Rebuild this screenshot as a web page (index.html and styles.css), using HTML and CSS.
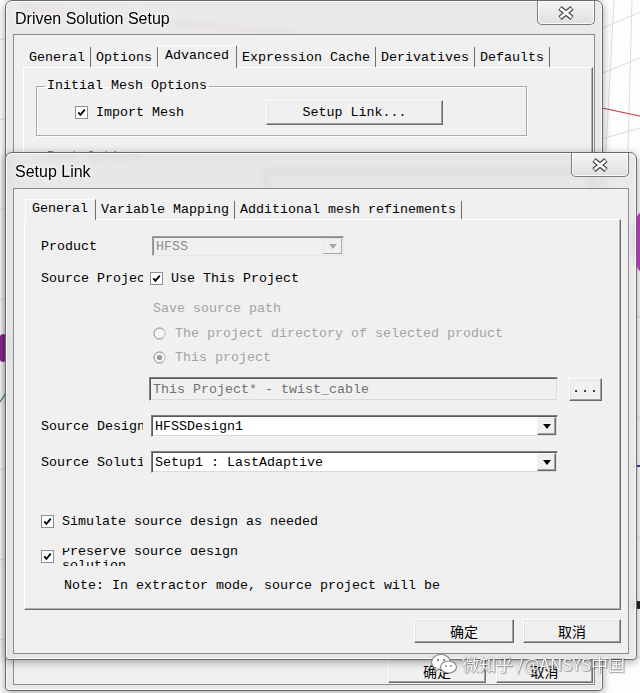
FILE: index.html
```html
<!DOCTYPE html>
<html lang="en">
<head>
  <meta charset="UTF-8" />
  <title>Setup Link</title>
  <link rel="stylesheet" href="styles.css">
</head>
<body>
  <div class="desk">
    <!-- modeler viewport behind the dialogs -->
    <svg class="viewport" width="640" height="693" viewBox="0 0 640 693">
      <g stroke="#dcdcdc" stroke-width="1" fill="none">
        <path d="M0 40 L8 38 M0 120 L8 118 M0 210 L8 208 M0 300 L8 298 M0 470 L8 468 M0 560 L8 558 M0 640 L8 638"/>
        <path d="M598 30 L640 12 M598 75 L640 58 M598 140 L640 128 M614 0 L606 150 M632 0 L628 150"/>
        <path d="M632 320 L640 316 M632 420 L640 417 M632 540 L640 537 M632 660 L640 657"/>
      </g>
      <path d="M18 0 Q26 9 60 14 L300 34" stroke="#d42a2a" stroke-width="2" fill="none" opacity=".6"/>
      <path d="M597 107 L640 116" stroke="#c43a3a" stroke-width="1.2"/>
      <ellipse cx="3" cy="348" rx="6" ry="14" fill="#8c2a96"/>
      <path d="M0 402 L6 393" stroke="#3a7d3a" stroke-width="1.2"/>
      <ellipse cx="642" cy="242" rx="9" ry="30" fill="#c83bd2"/>
      <path d="M632 466 L640 466" stroke="#3348b0" stroke-width="2"/>
      <ellipse cx="638" cy="605" rx="5" ry="4" fill="#222"/>
    </svg>

    <!-- parent dialog -->
    <div class="win win-driven">
      <div class="titlebar">
        <span class="title">Driven Solution Setup</span>
        <span class="close">
          <svg width="18" height="14" viewBox="0 0 18 14">
            <path d="M3 2 L15 12 M15 2 L3 12" stroke="#4a4a4a" stroke-width="5"/>
            <path d="M3.5 2.5 L14.5 11.5 M14.5 2.5 L3.5 11.5" stroke="#fff" stroke-width="2.6"/>
          </svg>
        </span>
      </div>
      <div class="client">
        <div class="tabs">
          <span class="tab">General</span>
          <span class="tab">Options</span>
          <span class="tab active">Advanced</span>
          <span class="tab">Expression Cache</span>
          <span class="tab">Derivatives</span>
          <span class="tab">Defaults</span>
        </div>
        <div class="panel driven-panel">
          <fieldset class="group">
            <legend>Initial Mesh Options</legend>
            <div class="group-row">
              <label class="check import">
                <svg class="box" width="13" height="13" viewBox="0 0 13 13"><rect x=".5" y=".5" width="12" height="12" fill="#fff" stroke="#8e8f8f"/><path d="M3.3 6.4 L5.4 8.8 L9.8 3.6" fill="none" stroke="#000" stroke-width="1.8"/></svg>
                Import Mesh
              </label>
              <span class="btn setup-btn">Setup Link...</span>
            </div>
          </fieldset>
          <fieldset class="group post">
            <legend>Post Options</legend>
            <div class="group-row post-row">
              <span class="field post-field"></span>
            </div>
          </fieldset>
        </div>
        <div class="footer">
          <span class="btn cjk ok-outer">确定</span>
          <span class="btn cjk cancel-outer">取消</span>
        </div>
      </div>
    </div>

    <!-- child dialog -->
    <div class="win win-link">
      <div class="titlebar link-bar">
        <span class="title">Setup Link</span>
        <span class="close">
          <svg width="18" height="14" viewBox="0 0 18 14">
            <path d="M3 2 L15 12 M15 2 L3 12" stroke="#4a4a4a" stroke-width="5"/>
            <path d="M3.5 2.5 L14.5 11.5 M14.5 2.5 L3.5 11.5" stroke="#fff" stroke-width="2.6"/>
          </svg>
        </span>
      </div>
      <div class="client link-client">
        <div class="tabs link-tabs">
          <span class="tab active">General</span>
          <span class="tab">Variable Mapping</span>
          <span class="tab">Additional mesh refinements</span>
        </div>
        <div class="panel link-panel">
          <div class="row r-product">
            <span class="lbl">Product</span>
            <span class="combo disabled product-combo">
              <span class="combo-text">HFSS</span>
              <span class="arrow"></span>
            </span>
          </div>
          <div class="row r-project">
            <span class="lbl">Source Project</span>
            <label class="check use-project">
              <svg class="box" width="13" height="13" viewBox="0 0 13 13"><rect x=".5" y=".5" width="12" height="12" fill="#fff" stroke="#8e8f8f"/><path d="M3.3 6.4 L5.4 8.8 L9.8 3.6" fill="none" stroke="#000" stroke-width="1.8"/></svg>
              Use This Project
            </label>
          </div>
          <div class="row r-save indent dim">Save source path</div>
          <div class="row r-radio1 indent dim">
            <svg class="radio" width="13" height="13" viewBox="0 0 13 13"><circle cx="6.5" cy="6.5" r="5.5" fill="#f6f6f6" stroke="#b9b9b9"/><path d="M10.4 2.6 A5.5 5.5 0 1 0 10.4 10.4" fill="none" stroke="#9d9d9d"/></svg>
            The project directory of selected product
          </div>
          <div class="row r-radio2 indent dim">
            <svg class="radio" width="13" height="13" viewBox="0 0 13 13"><circle cx="6.5" cy="6.5" r="5.5" fill="#f6f6f6" stroke="#b9b9b9"/><path d="M10.4 2.6 A5.5 5.5 0 1 0 10.4 10.4" fill="none" stroke="#9d9d9d"/><circle cx="6.5" cy="6.5" r="2.6" fill="#9a9a9a"/></svg>
            This project
          </div>
          <div class="row r-path">
            <span class="field path-field">This Project* - twist_cable</span>
            <span class="btn dots">...</span>
          </div>
          <div class="row r-design">
            <span class="lbl">Source Design</span>
            <span class="combo wide">
              <span class="combo-text">HFSSDesign1</span>
              <span class="arrow"></span>
            </span>
          </div>
          <div class="row r-solution">
            <span class="lbl">Source Solution</span>
            <span class="combo wide">
              <span class="combo-text">Setup1 : LastAdaptive</span>
              <span class="arrow"></span>
            </span>
          </div>
          <div class="row r-simulate">
            <label class="check">
              <svg class="box" width="13" height="13" viewBox="0 0 13 13"><rect x=".5" y=".5" width="12" height="12" fill="#fff" stroke="#8e8f8f"/><path d="M3.3 6.4 L5.4 8.8 L9.8 3.6" fill="none" stroke="#000" stroke-width="1.8"/></svg>
              Simulate source design as needed
            </label>
          </div>
          <div class="row r-preserve">
            <svg class="box" width="13" height="13" viewBox="0 0 13 13"><rect x=".5" y=".5" width="12" height="12" fill="#fff" stroke="#8e8f8f"/><path d="M3.3 6.4 L5.4 8.8 L9.8 3.6" fill="none" stroke="#000" stroke-width="1.8"/></svg>
            <span class="clip"><span>Preserve source design solution</span></span>
          </div>
          <div class="row r-note">Note: In extractor mode, source project will be</div>
        </div>
        <div class="footer link-footer">
          <span class="btn cjk ok">确定</span>
          <span class="btn cjk cancel">取消</span>
        </div>
      </div>
    </div>

    <div class="watermark">
      <svg width="28" height="22" viewBox="0 0 28 22">
        <ellipse cx="11" cy="9" rx="9.5" ry="7.5" fill="#fff" stroke="#8a8a8a" stroke-width="1.2"/>
        <path d="M6 15 L4.5 19 L9.5 16" fill="#fff" stroke="#8a8a8a" stroke-width="1.2"/>
        <ellipse cx="18.5" cy="14" rx="8" ry="6" fill="#fff" stroke="#8a8a8a" stroke-width="1.2"/>
        <circle cx="8" cy="7" r="1.2" fill="#8a8a8a"/>
        <circle cx="14" cy="7" r="1.2" fill="#8a8a8a"/>
        <circle cx="16" cy="13" r="1" fill="#8a8a8a"/>
        <circle cx="21" cy="13" r="1" fill="#8a8a8a"/>
      </svg>
      <span>微知乎 /@ANSYS中国</span>
    </div>
  </div>
</body>
</html>
```

FILE: styles.css
```css
* {
  box-sizing: border-box;
}

body {
  margin: 0;
  width: 640px;
  height: 693px;
  overflow: hidden;
  font-family: "Liberation Mono", "DejaVu Sans Mono", monospace;
  font-size: 13.33px;
  color: #000;
  background: #fdfdfd;
}

.desk {
  position: relative;
  width: 640px;
  height: 693px;
  overflow: hidden;
  background: #fdfdfd;
}

.viewport {
  position: absolute;
  left: 0;
  top: 0;
}

/* aero-basic window frame */
.win {
  position: absolute;
  display: flex;
  flex-direction: column;
  padding: 0 7px 5px;
  border: 1px solid #6b6b6b;
  border-radius: 7px 7px 4px 4px;
  background: rgba(228, 228, 228, 0.82);
  backdrop-filter: blur(3px);
  box-shadow: inset 0 0 0 1px rgba(255, 255, 255, 0.75), 0 2px 9px rgba(0, 0, 0, 0.35);
}

.win-driven {
  left: 5px;
  top: 0;
  width: 598px;
  height: 691px;
}

.win-link {
  left: 5px;
  top: 152px;
  width: 632px;
  height: 508px;
}

.titlebar {
  display: flex;
  align-items: center;
  height: 33px;
  flex-shrink: 0;
}

.link-bar {
  height: 35px;
}

.title {
  margin: 2px 0 0 2px;
  font-family: "Liberation Sans", Arial, sans-serif;
  font-size: 16px;
  color: #000;
  text-shadow: 0 0 6px #fff, 0 0 3px #fff;
}

.close {
  display: flex;
  align-items: center;
  justify-content: center;
  align-self: flex-start;
  margin-left: auto;
  width: 58px;
  height: 24px;
  border: 1px solid #7c7c7c;
  border-top: 0;
  border-radius: 0 0 5px 5px;
  background: linear-gradient(#f3f3f3, #e0e0e0);
  box-shadow: inset 0 0 0 1px rgba(255, 255, 255, 0.8);
}

.client {
  flex: 1;
  display: flex;
  flex-direction: column;
  padding: 10px 1px 1px 9px;
  border: 1px solid #8c8c8c;
  background: #f0f0f0;
}

/* tab strip */
.tabs {
  display: flex;
  align-items: flex-end;
  height: 22px;
  padding-left: 1px;
  flex-shrink: 0;
}

.tab {
  height: 20px;
  padding: 2px 5px 0;
  line-height: 18px;
  white-space: nowrap;
  border-right: 1px solid #6e6e6e;
}

.tab.active {
  position: relative;
  z-index: 1;
  height: 23px;
  margin-bottom: -1px;
  padding: 1px 7px 3px 6px;
  border-top: 1px solid #fff;
  border-left: 1px solid #fff;
  background: #f0f0f0;
}

.link-tabs {
  height: 20px;
}

.link-tabs .tab {
  height: 18px;
  padding-top: 0;
  line-height: 18px;
}

.link-tabs .tab.active {
  height: 21px;
  padding-top: 0;
  padding-bottom: 2px;
}

.panel {
  flex: 1;
  border: 1px solid;
  border-color: #fff #6e6e6e #6e6e6e #fff;
  box-shadow: inset -1px -1px #b4b4b4;
}

.driven-panel {
  padding: 10px 0 0 12px;
}

/* group boxes on the parent dialog */
.group {
  width: 491px;
  margin: 0;
  padding: 0 0 10px;
  border: 1px solid #a9a9a9;
  box-shadow: inset 1px 1px #fff, 1px 1px #fff;
}

.group legend {
  margin-left: 8px;
  padding: 0 2px;
  line-height: 16px;
}

.group-row {
  display: flex;
  align-items: center;
  height: 25px;
  margin-top: 6px;
  padding-left: 38px;
}

.post {
  margin-top: 13px;
  height: 120px;
}

.post legend {
  color: #777;
}

.post-row {
  margin-top: 3px;
  padding-left: 228px;
}

.post-field {
  width: 325px;
  height: 22px;
}

.check {
  display: flex;
  align-items: center;
  gap: 8px;
  white-space: nowrap;
}

.box,
.radio {
  flex-shrink: 0;
}

.import {
  width: 191px;
}

.setup-btn {
  width: 177px;
  height: 25px;
}

/* classic raised button */
.btn {
  display: flex;
  align-items: center;
  justify-content: center;
  flex-shrink: 0;
  border: 1px solid;
  border-color: #fff #6a6a6a #6a6a6a #fff;
  background: #f0f0f0;
  box-shadow: inset -1px -1px #a0a0a0, inset 1px 1px #e3e3e3;
  white-space: nowrap;
}

.cjk {
  font-family: "Noto Sans CJK SC", sans-serif;
  font-size: 14px;
}

.footer {
  display: flex;
  justify-content: flex-end;
  gap: 10px;
  margin-top: 10px;
  flex-shrink: 0;
}

.ok-outer {
  width: 98px;
  height: 24px;
}

.cancel-outer {
  width: 97px;
  height: 24px;
}

/* Setup Link body */
.link-client {
  padding: 10px 7px 10px 10px;
}

.link-panel {
  padding: 16px 0 0 16px;
}

.row {
  display: flex;
  align-items: center;
  white-space: nowrap;
}

.lbl {
  width: 102px;
  margin-right: 8px;
  overflow: hidden;
  white-space: nowrap;
}

.r-product { height: 20px; }
.r-project { height: 20px; margin-top: 12px; }
.r-save { height: 18px; margin-top: 11px; }
.r-radio1 { height: 18px; margin-top: 7px; }
.r-radio2 { height: 18px; margin-top: 6px; }
.r-path { height: 24px; margin-top: 11px; padding-left: 108px; }
.r-design { height: 22px; margin-top: 14px; }
.r-solution { height: 22px; margin-top: 14px; }
.r-simulate { height: 20px; margin-top: 38px; }
.r-preserve { height: 20px; margin-top: 15px; }
.r-note { height: 18px; margin-top: 10px; padding-left: 23px; }

.indent {
  padding-left: 112px;
  gap: 9px;
}

.dim {
  color: #a3a3a3;
}

.use-project {
  margin-left: -1px;
}

/* sunken edit / combo fields */
.field,
.combo {
  display: flex;
  align-items: center;
  border: 1px solid;
  border-color: #7f7f7f #f4f4f4 #f4f4f4 #7f7f7f;
  box-shadow: inset 1px 1px #595959, inset -1px -1px #dadada;
}

.field {
  background: #f0f0f0;
}

.path-field {
  width: 409px;
  height: 24px;
  padding-left: 3px;
  color: #707070;
}

.dots {
  width: 33px;
  height: 23px;
  margin-left: 11px;
  padding-bottom: 2px;
  letter-spacing: 1px;
}

.combo {
  background: #fff;
  padding: 1px;
}

.combo-text {
  padding-left: 2px;
}

.wide {
  width: 407px;
  height: 22px;
}

.product-combo {
  width: 192px;
  height: 20px;
  margin-left: 1px;
  background: #f0f0f0;
  border-color: #a0a0a0 #e8e8e8 #e8e8e8 #a0a0a0;
  box-shadow: inset 1px 1px #8a8a8a;
}

.product-combo .combo-text {
  color: #8c8c8c;
}

.arrow {
  display: flex;
  align-items: center;
  justify-content: center;
  margin-left: auto;
  width: 19px;
  height: 100%;
  border: 1px solid;
  border-color: #f4f4f4 #6a6a6a #6a6a6a #f4f4f4;
  background: #f0f0f0;
  box-shadow: inset -1px -1px #a0a0a0;
}

.arrow::before {
  content: "";
  border-left: 4px solid transparent;
  border-right: 4px solid transparent;
  border-top: 5px solid #000;
}

.disabled .arrow {
  border-color: #e6e6e6 #a8a8a8 #a8a8a8 #e6e6e6;
  box-shadow: none;
}

.disabled .arrow::before {
  border-top-color: #a6a6a6;
}

.r-simulate .check,
.r-preserve {
  gap: 8px;
}

/* label text is cut by its own box, as the dialog does */
.clip {
  align-self: flex-end;
  width: 200px;
  height: 18px;
  overflow: hidden;
  white-space: normal;
  line-height: 14px;
}

.clip span {
  display: block;
  margin-top: -3px;
}

.link-footer {
  margin-top: 9px;
  gap: 9px;
}

.ok {
  width: 100px;
  height: 24px;
}

.cancel {
  width: 98px;
  height: 24px;
}

/* share watermark in the corner */
.watermark {
  position: absolute;
  left: 430px;
  top: 651px;
  display: flex;
  align-items: center;
  gap: 4px;
  font-family: "Noto Sans CJK SC", sans-serif;
  font-size: 17px;
  color: rgba(255, 255, 255, 0.92);
  text-shadow: 0 0 1px #777, 1px 1px 1px rgba(0, 0, 0, 0.35);
  white-space: nowrap;
}
```
